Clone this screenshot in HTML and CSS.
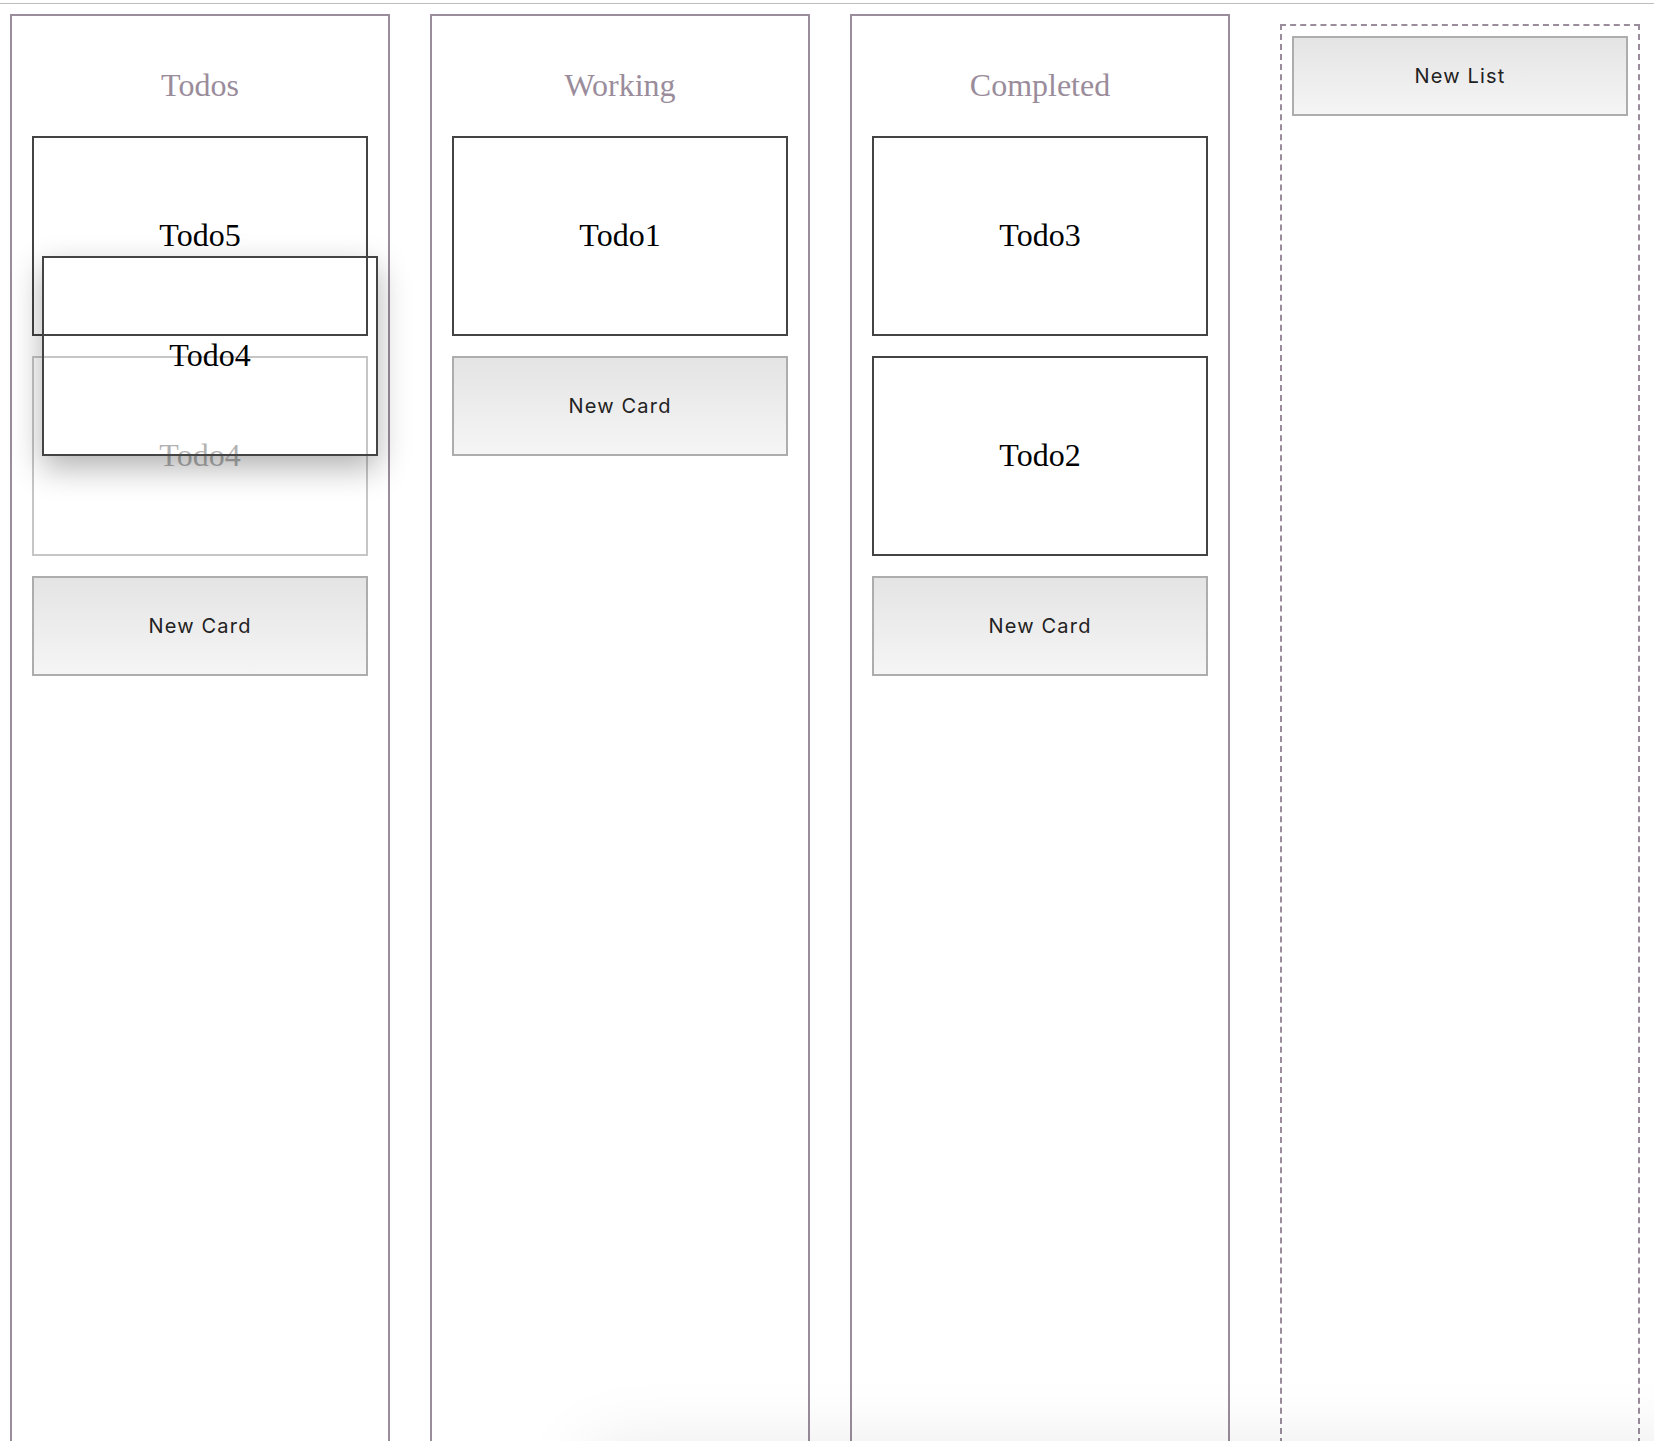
FILE: index.html
```html
<!DOCTYPE html>
<html lang="en">
<head>
    <meta charset="UTF-8">
    <meta name="viewport" content="width=device-width, initial-scale=1.0">
    <title>Trello Board</title>
    <link rel="stylesheet" href="styles.css">
</head>
<body>
    <div class="top-line"></div>

    <div class="board">
        <div class="list">
            <h1 class="list-title">Todos</h1>
            <div class="card">Todo5</div>
            <div class="card card-placeholder">Todo4</div>
            <button class="btn">New Card</button>
        </div>

        <div class="list">
            <h1 class="list-title">Working</h1>
            <div class="card">Todo1</div>
            <button class="btn">New Card</button>
        </div>

        <div class="list">
            <h1 class="list-title">Completed</h1>
            <div class="card">Todo3</div>
            <div class="card">Todo2</div>
            <button class="btn">New Card</button>
        </div>

        <div class="new-list">
            <button class="btn btn-list">New List</button>
        </div>
    </div>

    <!-- card being dragged -->
    <div class="card drag-ghost">Todo4</div>

    <div class="drop-shade"></div>
</body>
</html>
```

FILE: styles.css
```css
body {
    margin: 0;
    font-family: 'Liberation Serif', 'Times New Roman', serif;
    background: white;
}

.top-line {
    height: 1px;
    margin-top: 3px;
    background: #bdbdbd;
}

.board {
    display: flex;
    align-items: flex-start;
    gap: 40px;
    padding: 10px 10px 0;
}

.list {
    width: 380px;
    min-height: 1440px;
    box-sizing: border-box;
    padding: 0 20px;
    border: 2px solid #9a8c9b;
}

.list-title {
    margin: 52px 0 34px 0;
    font-size: 32px;
    line-height: 34px;
    font-weight: normal;
    text-align: center;
    color: #9a8c9b;
}

.card {
    height: 200px;
    box-sizing: border-box;
    margin-bottom: 20px;
    padding-bottom: 2px;
    border: 2px solid #444;
    background: white;
    display: flex;
    align-items: center;
    justify-content: center;
    font-size: 32px;
    color: black;
}

.card-placeholder {
    opacity: 0.3;
}

.btn {
    display: block;
    width: 100%;
    height: 100px;
    box-sizing: border-box;
    border: 2px solid #adadad;
    background: linear-gradient(to bottom, #e4e4e4 0%, #f5f5f5 100%);
    font-family: 'Inter', 'Liberation Sans', sans-serif;
    font-size: 20px;
    letter-spacing: 1.2px;
    color: #222;
    cursor: pointer;
}

.new-list {
    width: 360px;
    min-height: 1440px;
    box-sizing: border-box;
    margin: 10px 0 0 10px;
    padding: 10px;
    border: 2px dashed #9a8c9b;
}

.btn-list {
    height: 80px;
}

.drag-ghost {
    position: absolute;
    left: 42px;
    top: 256px;
    width: 336px;
    margin: 0;
    background: transparent;
    box-shadow: 0 12px 30px rgba(0,0,0,0.3);
}

.drop-shade {
    position: fixed;
    left: 600px;
    right: -200px;
    top: 1460px;
    height: 200px;
    box-shadow: 0 0 70px 10px rgba(0,0,0,0.1);
    pointer-events: none;
}
```
